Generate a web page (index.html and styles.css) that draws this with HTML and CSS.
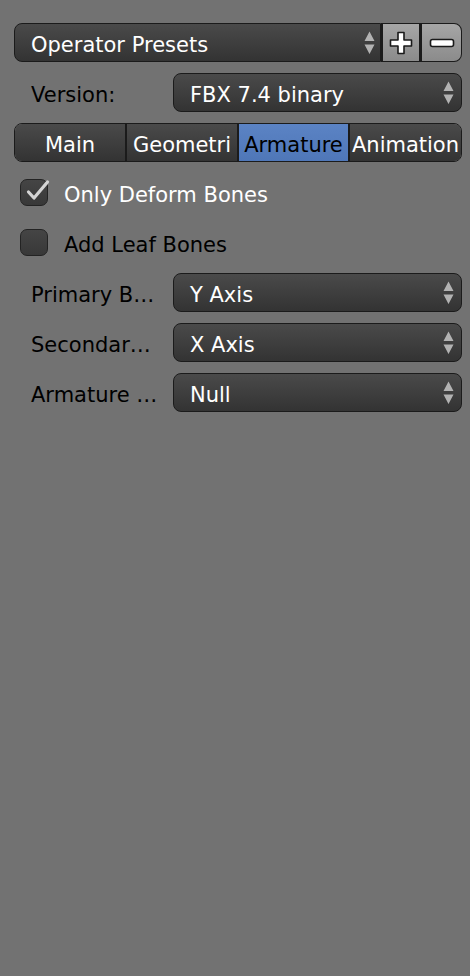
FILE: index.html
```html
<!DOCTYPE html>
<html>
<head>
<meta charset="utf-8">
<link rel="stylesheet" href="styles.css">
</head>
<body>
<div class="panel">
  <div class="row presets">
    <div class="menu preset-menu">
      <span class="menu-text">Operator Presets</span>
      <svg class="updown" width="11" height="24" viewBox="0 0 11 24"><path d="M0.5 10 L5.5 0.5 L10.5 10 Z M0.5 13.5 L10.5 13.5 L5.5 23 Z"/></svg>
    </div>
    <div class="btn plus">
      <svg width="24" height="24" viewBox="0 0 24 24"><path d="M9 1.5 H15 V9 H22.5 V15 H15 V22.5 H9 V15 H1.5 V9 H9 Z" fill="#fff" stroke="#1a1a1a" stroke-width="1.6" stroke-linejoin="round"/></svg>
    </div>
    <div class="btn minus">
      <svg width="26" height="10" viewBox="0 0 26 10"><rect x="1.5" y="1.5" width="23" height="7" rx="2" fill="#fff" stroke="#1a1a1a" stroke-width="1.6"/></svg>
    </div>
  </div>

  <div class="row prop">
    <span class="label">Version:</span>
    <div class="menu">
      <span class="menu-text">FBX 7.4 binary</span>
      <svg class="updown" width="11" height="24" viewBox="0 0 11 24"><path d="M0.5 10 L5.5 0.5 L10.5 10 Z M0.5 13.5 L10.5 13.5 L5.5 23 Z"/></svg>
    </div>
  </div>

  <div class="row tabs">
    <div class="tab"><span class="tab-text">Main</span></div>
    <div class="tab"><span class="tab-text">Geometri</span></div>
    <div class="tab active"><span class="tab-text">Armature</span></div>
    <div class="tab"><span class="tab-text">Animation</span></div>
  </div>

  <div class="row check on">
    <div class="box">
      <svg class="tick" width="32" height="30" viewBox="0 0 32 30"><path d="M7.5 12 L13 18 L26.5 2" fill="none" stroke="#d4d4d4" stroke-width="3.2" stroke-linecap="round" stroke-linejoin="round"/></svg>
    </div>
    <span class="check-label">Only Deform Bones</span>
  </div>

  <div class="row check">
    <div class="box"></div>
    <span class="check-label">Add Leaf Bones</span>
  </div>

  <div class="row prop">
    <span class="label">Primary B…</span>
    <div class="menu">
      <span class="menu-text">Y Axis</span>
      <svg class="updown" width="11" height="24" viewBox="0 0 11 24"><path d="M0.5 10 L5.5 0.5 L10.5 10 Z M0.5 13.5 L10.5 13.5 L5.5 23 Z"/></svg>
    </div>
  </div>

  <div class="row prop">
    <span class="label">Secondar…</span>
    <div class="menu">
      <span class="menu-text">X Axis</span>
      <svg class="updown" width="11" height="24" viewBox="0 0 11 24"><path d="M0.5 10 L5.5 0.5 L10.5 10 Z M0.5 13.5 L10.5 13.5 L5.5 23 Z"/></svg>
    </div>
  </div>

  <div class="row prop">
    <span class="label">Armature …</span>
    <div class="menu">
      <span class="menu-text">Null</span>
      <svg class="updown" width="11" height="24" viewBox="0 0 11 24"><path d="M0.5 10 L5.5 0.5 L10.5 10 Z M0.5 13.5 L10.5 13.5 L5.5 23 Z"/></svg>
    </div>
  </div>
</div>
</body>
</html>
```

FILE: styles.css
```css
html, body {
  margin: 0;
  padding: 0;
  background: #727272;
  height: 100%;
}

body {
  font-family: "DejaVu Sans", "Liberation Sans", sans-serif;
  font-size: 21px;
  color: #000;
}

.panel {
  display: flex;
  flex-direction: column;
  gap: 11px;
  padding: 23px 8px 0 14px;
}

.row {
  display: flex;
  align-items: center;
  height: 39px;
}

/* text sits slightly below the widget centre, as in Blender */
.menu-text,
.label,
.tab-text,
.check-label {
  padding-top: 5px;
  white-space: nowrap;
}

.menu {
  flex: 1;
  height: 39px;
  box-sizing: border-box;
  display: flex;
  align-items: center;
  justify-content: space-between;
  padding: 0 7px 0 16px;
  border: 1px solid #1b1b1b;
  border-radius: 8px;
  background: linear-gradient(#4a4a4a, #333333);
  color: #fff;
}

.updown {
  fill: #b2b2b2;
  flex: none;
}

.preset-menu {
  border-radius: 8px 0 0 8px;
  padding-right: 5px;
}

.btn {
  height: 39px;
  box-sizing: border-box;
  display: flex;
  align-items: center;
  justify-content: center;
  border: 1px solid #1b1b1b;
  border-left: 2px solid #1b1b1b;
  background: linear-gradient(#a6a6a6, #8b8b8b);
}

.plus {
  width: 39px;
}

.minus {
  width: 42px;
  border-radius: 0 8px 8px 0;
}

.prop .label {
  width: 159px;
  flex: none;
  box-sizing: border-box;
  padding-left: 17px;
  overflow: hidden;
}

.tabs {
  display: grid;
  grid-template-columns: 110px 112px 111px 1fr;
  border: 1px solid #1b1b1b;
  border-radius: 8px;
  overflow: hidden;
  box-sizing: border-box;
}

.tab {
  height: 100%;
  display: flex;
  align-items: center;
  justify-content: center;
  background: linear-gradient(#4a4a4a, #333333);
  color: #fff;
  border-left: 2px solid #1b1b1b;
  overflow: hidden;
}

.tab:first-child {
  border-left: none;
}

.tab.active {
  background: linear-gradient(#5b83c4, #4f77b8);
  color: #000;
}

.check {
  gap: 16px;
}

.box {
  position: relative;
  width: 28px;
  height: 27px;
  margin-left: 6px;
  box-sizing: border-box;
  border: 1px solid #232323;
  border-radius: 7px;
  background: linear-gradient(#454545, #383838);
  flex: none;
}

.tick {
  position: absolute;
  left: 0;
  top: 0;
  overflow: visible;
}

.check.on .check-label {
  color: #fff;
}
```
